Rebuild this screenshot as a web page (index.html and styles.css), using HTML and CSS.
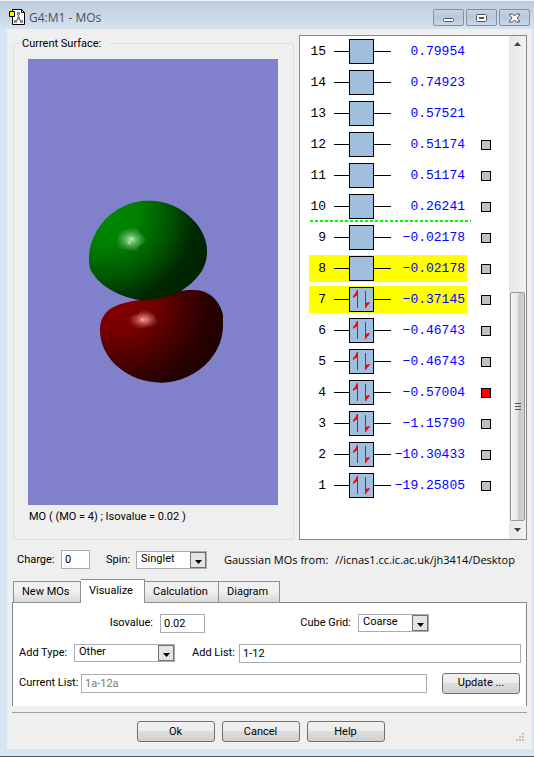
FILE: index.html
```html
<!DOCTYPE html>
<html lang="en">
<head>
  <meta charset="UTF-8">
  <meta name="viewport" content="width=device-width, initial-scale=1.0">
  <title>G4:M1 - MOs</title>
  <link rel="stylesheet" href="styles.css">
</head>
<body>
  <div class="window">
    <header class="titlebar">
      <svg class="app-icon" width="17" height="17" viewBox="0 0 17 17" aria-hidden="true">
        <path d="M3.5.5h9l3 3v12h-12z" fill="#fff" stroke="#000"/>
        <path d="M12.5 .5v3h3" fill="none" stroke="#000"/>
        <path d="M9.5 4v5l-3 4M9.5 9l3 4" fill="none" stroke="#888" stroke-width="1.5"/>
        <path d="M8 3h3v3H8zM8 8h3v2H8zM5 11h3v3H5zM11 11h3v3h-3z" fill="#888"/>
        <path d="M.5 2.5h5v5h-5z" fill="#ff0" stroke="#000"/>
      </svg>
      <h1>G4:M1 - MOs</h1>
      <div class="window-buttons">
        <button type="button" aria-label="Minimize">
          <svg width="13" height="10" viewBox="0 0 13 10"><rect x="1.5" y="5.5" width="10" height="3" rx="1" fill="#fff" stroke="#4d5361"/></svg>
        </button>
        <button type="button" aria-label="Maximize">
          <svg width="13" height="10" viewBox="0 0 13 10"><rect x="1.5" y="1.5" width="10" height="7" rx="1" fill="#fff" stroke="#4d5361"/><rect x="4.5" y="4.5" width="4" height="1" fill="none" stroke="#4d5361"/></svg>
        </button>
        <button type="button" aria-label="Close">
          <svg width="13" height="10" viewBox="0 0 13 10"><path d="M1.5 1h3l2 2 2-2h3v1L9 5l2.5 3v1h-3l-2-2-2 2h-3V8L4 5 1.5 2z" fill="#fff" stroke="#4d5361"/></svg>
        </button>
      </div>
    </header>

    <main>
      <div class="top">
        <fieldset class="surface">
          <legend>Current Surface:</legend>
          <svg class="canvas" viewBox="0 0 750 1338" role="img" aria-label="Molecular orbital surface">
            <defs>
              <radialGradient id="green" gradientUnits="userSpaceOnUse" cx="110" cy="75" r="330">
                <stop offset="0" stop-color="#008a00"/>
                <stop offset=".3" stop-color="#007e00"/>
                <stop offset=".58" stop-color="#005400"/>
                <stop offset=".8" stop-color="#002800"/>
                <stop offset="1" stop-color="#002200"/>
              </radialGradient>
              <radialGradient id="red" gradientUnits="userSpaceOnUse" cx="150" cy="330" r="340">
                <stop offset="0" stop-color="#860000"/>
                <stop offset=".3" stop-color="#740000"/>
                <stop offset=".55" stop-color="#4a0000"/>
                <stop offset=".8" stop-color="#260000"/>
                <stop offset="1" stop-color="#200000"/>
              </radialGradient>
              <radialGradient id="shine">
                <stop offset="0" stop-color="#d8ffd8"/>
                <stop offset=".25" stop-color="#90d890" stop-opacity=".8"/>
                <stop offset="1" stop-color="#40a040" stop-opacity="0"/>
              </radialGradient>
              <radialGradient id="shine-red">
                <stop offset="0" stop-color="#ffc8c8"/>
                <stop offset=".3" stop-color="#e07878" stop-opacity=".8"/>
                <stop offset="1" stop-color="#a03030" stop-opacity="0"/>
              </radialGradient>
            </defs>
            <g transform="translate(126 393)">
              <path fill="url(#red)" d="M210 330C165 336 128 346 108 368C94 384 90 398 90 425C92 470 115 505 145 532C180 562 225 578 275 578C330 577 380 552 415 515C445 482 459 445 459 405V375C452 345 438 325 415 311C400 302 385 300 365 300C340 300 320 303 310 308C285 320 250 322 210 330Z"/>
              <path fill="url(#green)" d="M235 32C180 31 125 60 92 105C70 135 58 165 57 205C57 230 62 245 72 255C85 275 105 290 130 304C155 318 190 328 215 332C245 332 275 324 306 316C340 302 375 275 396 242C408 220 411 205 411 180C410 150 397 120 375 95C335 50 285 31 235 32Z"/>
              <path fill="url(#shine)" d="M148 124L178 115L196 108L210 130L234 150L208 168L197 186L166 176L133 190L140 158Z"/>
              <path fill="url(#shine-red)" d="M172 380L205 372L220 357L250 372L270 404L238 410L190 420L182 400Z"/>
              <circle cx="178" cy="157" r="13" fill="url(#shine)"/>
              <circle cx="217" cy="389" r="15" fill="url(#shine-red)"/>
            </g>
          </svg>
          <p>MO ( (MO = 4) ; Isovalue = 0.02 )</p>
        </fieldset>

        <div class="levels">
          <table>
            <tbody id="levels"></tbody>
          </table>
          <div class="scrollbar" aria-hidden="true">
            <svg width="17" height="17" viewBox="0 0 17 17"><path d="M5 10l3.500-4 3.500 4z" fill="#444"/></svg>
            <div class="thumb"><i></i><i></i><i></i></div>
            <svg width="17" height="17" viewBox="0 0 17 17"><path d="M5 6l3.500 4L12 6z" fill="#444"/></svg>
          </div>
        </div>
      </div>

      <div class="state">
        <label class="w-charge" for="charge">Charge:</label>
        <input class="short" id="charge" type="text" value="0">
        <label class="w-spin" for="spin">Spin:</label>
        <select id="spin"><option>Singlet</option><option>Triplet</option></select>
        <p class="source"><span>Gaussian MOs from:</span> <span>//icnas1.cc.ic.ac.uk/jh3414/Desktop</span></p>
      </div>

      <div class="tabs" role="tablist">
        <button type="button" role="tab">New MOs</button>
        <button type="button" role="tab" class="active" aria-selected="true">Visualize</button>
        <button type="button" role="tab" class="wide">Calculation</button>
        <button type="button" role="tab">Diagram</button>
      </div>
      <form class="panel" role="tabpanel">
        <div class="row first">
          <label for="isovalue">Isovalue:</label>
          <input class="medium" id="isovalue" type="text" value="0.02">
          <label class="push" for="grid">Cube Grid:</label>
          <select id="grid"><option>Coarse</option><option>Medium</option><option>Fine</option></select>
        </div>
        <div class="row">
          <label class="w-type" for="type">Add Type:</label>
          <select class="long" id="type"><option>Other</option></select>
          <label class="w-list" for="list">Add List:</label>
          <input class="grow" id="list" type="text" value="1-12">
        </div>
        <div class="row">
          <label class="w-current" for="current">Current List:</label>
          <input class="grow" id="current" type="text" value="1a-12a" disabled>
          <button type="button" class="btn update">Update ...</button>
        </div>
      </form>

      <footer>
        <button type="button" class="btn">Ok</button>
        <button type="button" class="btn">Cancel</button>
        <button type="button" class="btn">Help</button>
        <svg class="grip" width="9" height="9" viewBox="0 0 9 9" aria-hidden="true"><path d="M6 0h2v2H6zM3 3h2v2H3zM6 3h2v2H6zM0 6h2v2H0zM3 6h2v2H3zM6 6h2v2H6z" fill="#c0c0c0"/></svg>
      </footer>
    </main>
  </div>

  <script>
    const energies = [
      "−19.25805", "−10.30433", "−1.15790", "−0.57004", "−0.46743",
      "−0.46743", "−0.37145", "−0.02178", "−0.02178", "0.26241",
      "0.51174", "0.51174", "0.57521", "0.74923", "0.79954"
    ];
    const occupied = 7;     // filled levels
    const computed = 12;    // levels with a surface
    const current = 4;

    const arrows = '<path d="M23.5 21V4M31.5 4v17" stroke="#f00" fill="none"/>' +
      '<path d="M24 3v5l-2 1-3 2V9l2-2 2-4zM31 21v-5l5-1-1 2-2 2-1 2z" fill="#f00"/>';

    let rows = "";
    for (let n = energies.length; n >= 1; n--) {
      let cls = "";
      if (n === 7 || n === 8) cls = "selected";
      if (n === 10) cls = "divider";
      rows += `<tr class="${cls}">
        <td class="number">${n}</td>
        <td class="orbital"><svg width="57" height="25" viewBox="0 0 57 25">
          <path d="M0 12.5h57" stroke="#000"/>
          <rect x="15.5" y=".5" width="24" height="24" fill="#a0bede" stroke="#000"/>
          ${n <= occupied ? arrows : ""}
        </svg></td>
        <td class="energy">${energies[n - 1]}</td>
        <td class="show">${n <= computed ? `<input type="checkbox" aria-label="Show MO ${n}" ${n === current ? "checked" : ""}>` : ""}</td>
      </tr>`;
    }
    document.getElementById("levels").innerHTML = rows;
  </script>
</body>
</html>
```

FILE: styles.css
```css
* {
  box-sizing: border-box;
}
body {
  margin: 0;
  font: 11px/14px "Roboto", "Liberation Sans", sans-serif;
  color: #000;
}
p {
  margin: 0;
}
input, select, button {
  font: inherit;
  color: inherit;
  margin: 0;
}
label {
  white-space: nowrap;
}

.window {
  min-height: 100vh;
  display: flex;
  flex-direction: column;
  background: #d7e5f2;
  border-top: 1px solid #e9eff5;
  border-bottom: 1px solid #555;
  padding: 0 2px 7px 7px;
}

/* title bar */
.titlebar {
  display: flex;
  align-items: center;
  height: 28px;
  margin: 0 -2px 0 -7px;
  padding: 5px 4px 0 9px;
  background: linear-gradient(#bccbdb, #d5e3f0);
}
.titlebar h1 {
  flex: 1;
  margin: 0 0 0 3px;
  font: 12px/16px "Open Sans", "Noto Sans", sans-serif;
  color: #4b5058;
}
.window-buttons {
  display: flex;
  gap: 2px;
}
.window-buttons button {
  display: flex;
  align-items: center;
  justify-content: center;
  width: 31px;
  height: 17px;
  padding: 0;
  border: 1px solid #8391a8;
  border-radius: 2px;
  background: linear-gradient(#c6d3e2, #b9c8da 50%, #c9d7e6);
}

main {
  flex: 1;
  background: #efefef;
  padding: 6px 5px;
}

/* surface + level list */
.top {
  display: flex;
  gap: 5px;
}
.surface {
  flex: 1;
  min-width: 0;
  margin: 1px 0 0 1px;
  padding: 8px 15px 15px 14px;
  border: 1px solid #d3dfea;
  border-radius: 3px;
}
.surface legend {
  margin-left: -7px;
  padding: 0 9px 0 1px;
  line-height: 15px;
}
.canvas {
  display: block;
  width: 100%;
  height: 446px;
  background: #8080cb;
}
.surface p {
  padding: 5px 1px 0;
}
.levels {
  display: flex;
  width: 228px;
  border: 1px solid #828790;
  background: #fff;
}
.levels table {
  align-self: flex-start;
  margin: 1px 0 0 9px;
  border-spacing: 0;
  font: 13px/15px "Liberation Mono", monospace;
}
.levels td {
  height: 31px;
  padding: 0;
  border: solid transparent;
  border-width: 1px 0 3px;
  background-clip: padding-box;
}
.levels .number {
  width: 17px;
  text-align: right;
}
.orbital svg {
  display: block;
  margin-left: 8px;
}
.levels .energy {
  width: 76px;
  padding-right: 2px;
  text-align: right;
  color: #00f;
}
.levels .show {
  padding-left: 14px;
}
.selected td:not(.show) {
  background-color: #ff0;
}
.divider {
  background: repeating-linear-gradient(90deg, #0f0 0 3px, #fff 3px 5px) 1px 28px / 161px 2px no-repeat;
}
.show input {
  display: block;
  appearance: none;
  width: 10px;
  height: 10px;
  border: 1px solid #000;
  background: #c0c0c0;
}
.show input:checked {
  background: #f00;
}
.scrollbar {
  display: flex;
  flex-direction: column;
  width: 17px;
  margin-left: auto;
  background: linear-gradient(90deg, #e6e6e6, #f2f2f2);
}
.thumb {
  display: flex;
  flex-direction: column;
  align-items: center;
  justify-content: center;
  gap: 1px;
  height: 229px;
  margin: auto 1px 1px;
  border: 1px solid #979797;
  border-radius: 2px;
  background: linear-gradient(90deg, #f4f4f4, #e6e6e6 50%, #c8c8c8 60%, #d2d2d2);
}
.thumb i {
  width: 6px;
  height: 2px;
  border-top: 1px solid #555;
}

/* fields */
input[type="text"] {
  height: 19px;
  min-width: 0;
  padding: 0 3px;
  border: 1px solid #abadb3;
  background: #fff;
}
input:disabled {
  color: #7a7a7a;
}
select {
  appearance: none;
  width: 71px;
  height: 18px;
  padding: 0 18px 2px 4px;
  border: 1px solid #abadb3;
  border-radius: 0;
  background: #fff url("data:image/svg+xml,%3Csvg xmlns='http://www.w3.org/2000/svg' width='16' height='16'%3E%3Crect x='.5' y='.5' width='15' height='15' fill='%23e4e4e4' stroke='%23707070'/%3E%3Cpath d='M5 8h7L8.5 12z'/%3E%3C/svg%3E") right top no-repeat;
}
.short {
  width: 29px;
}
.medium {
  width: 45px;
}
.long {
  width: 101px;
}
.grow {
  flex: 1;
}

.state {
  display: flex;
  align-items: center;
  padding: 10px 6px 0 5px;
}
.w-charge {
  width: 44px;
}
.w-spin {
  width: 30px;
  margin-left: 16px;
}
.source {
  flex: 1;
  min-width: 0;
  margin-left: 17px;
  overflow: hidden;
  white-space: nowrap;
  font: 11px/16px "Open Sans", "Noto Sans", sans-serif;
}
.source span + span {
  margin-left: 4px;
}

/* tabs */
.tabs {
  position: relative;
  display: flex;
  align-items: flex-end;
  margin: 10px 0 -1px;
  padding-left: 1px;
}
.tabs button {
  min-width: 68px;
  height: 22px;
  padding: 0 8px;
  border: 1px solid #8e8f8f;
  background: linear-gradient(#f1f1f1 45%, #d8d8d8);
  text-align: left;
}
.tabs button + button {
  min-width: 61px;
  border-left: 0;
}
.tabs .wide {
  min-width: 74px;
}
.tabs .active {
  height: 24px;
  padding-bottom: 2px;
  border-bottom: 0;
  background: #fff;
}
.tabs button + .active {
  min-width: 64px;
}
.tabs button + .wide {
  min-width: 74px;
}
.panel {
  display: flex;
  flex-direction: column;
  gap: 10px;
  padding: 10px 5px 13px 6px;
  border: solid #828790;
  border-width: 1px 1px 0;
  background: #fff;
}
.row {
  display: flex;
  align-items: center;
  height: 20px;
}
.first label {
  width: 64px;
  margin-left: 141px;
  padding-right: 7px;
  text-align: right;
}
.first label:first-child {
  margin-left: 77px;
}
.first .push {
  margin-left: 89px;
}
.w-type {
  width: 55px;
}
.w-list {
  width: 47px;
  margin-left: 17px;
}
.w-current {
  width: 62px;
}

.btn {
  width: 78px;
  height: 21px;
  padding: 0;
  border: 1px solid #707070;
  border-radius: 3px;
  background: linear-gradient(#f2f2f2, #ebebeb 50%, #dddddd 50%, #cfcfcf);
}
.update {
  margin: 0 1px 0 15px;
}
footer {
  position: relative;
  display: flex;
  justify-content: center;
  gap: 7px;
  margin-top: 6px;
  padding: 8px 18px 0 0;
  border-top: 1px solid #a0a0a0;
}
.grip {
  position: absolute;
  right: 2px;
  bottom: 0;
}
```
